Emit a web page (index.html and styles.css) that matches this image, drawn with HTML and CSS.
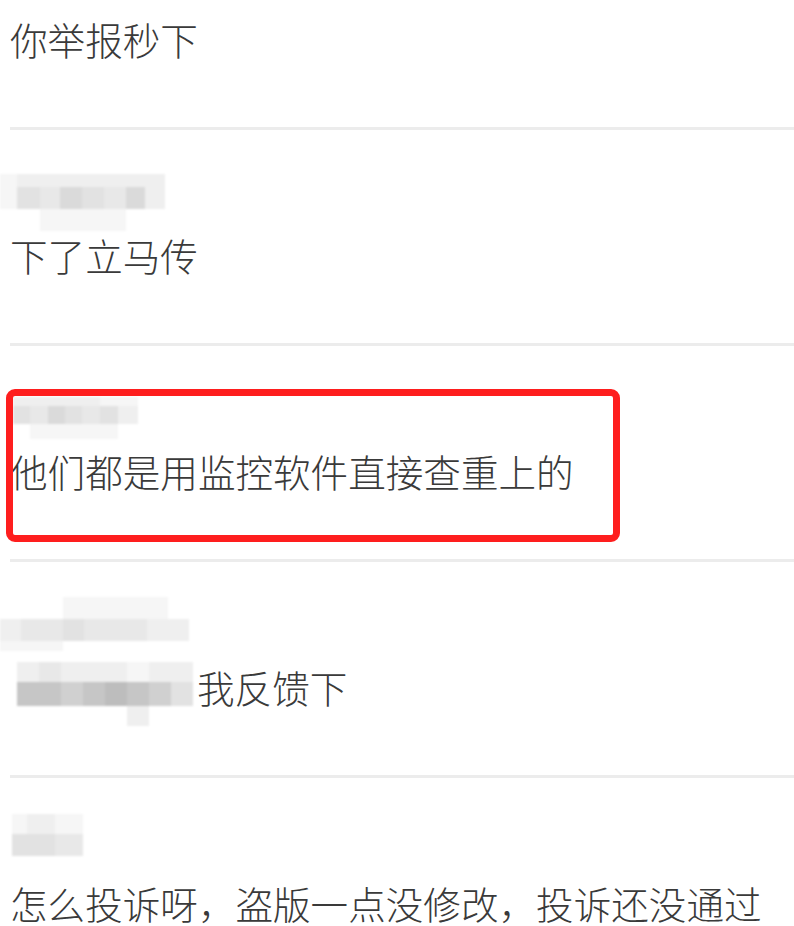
FILE: index.html
```html
<!DOCTYPE html>
<html lang="zh-CN">
<head>
<meta charset="utf-8">
<title>评论</title>
<link rel="stylesheet" href="styles.css">
</head>
<body>
<div class="list">
  <div class="comment first">
    <div class="text">你举报秒下</div>
  </div>

  <div class="comment">
    <div class="name">
      <div class="mosaic mz-a">
        <i class="s0"></i><i class="s1"></i><i class="s1"></i><i class="s1"></i><i class="s1"></i><i class="s1"></i><i class="s1"></i><i class="s1"></i>
        <i class="s0"></i><i class="s3"></i><i class="s2"></i><i class="s4"></i><i class="s3"></i><i class="s2"></i><i class="s4"></i><i class="s1"></i>
        <i></i><i></i><i class="s0"></i><i class="s0"></i><i class="s0"></i><i class="s0"></i><i></i><i></i>
      </div>
    </div>
    <div class="text">下了立马传</div>
  </div>

  <div class="comment marked">
    <div class="name">
      <div class="mosaic mz-b">
        <i class="s1"></i><i class="s1"></i><i class="s1"></i><i class="s1"></i><i class="s1"></i><i class="s0"></i><i class="s0"></i>
        <i class="s3"></i><i class="s2"></i><i class="s4"></i><i class="s3"></i><i class="s2"></i><i class="s3"></i><i class="s1"></i>
        <i></i><i class="s0"></i><i class="s0"></i><i class="s0"></i><i class="s0"></i><i class="s0"></i><i></i>
      </div>
    </div>
    <div class="text">他们都是用监控软件直接查重上的</div>
    <div class="highlight"></div>
  </div>

  <div class="comment">
    <div class="name">
      <div class="mosaic mz-c">
        <i></i><i></i><i></i><i class="s0"></i><i class="s0"></i><i class="s0"></i><i class="s0"></i><i class="s0"></i><i></i>
        <i class="s1"></i><i class="s2"></i><i class="s2"></i><i class="s3"></i><i class="s2"></i><i class="s2"></i><i class="s2"></i><i class="s1"></i><i class="s1"></i>
        <i class="s0"></i><i class="s0"></i><i class="s0"></i><i></i><i></i><i></i><i></i><i></i><i></i>
      </div>
    </div>
    <div class="text with-mosaic">
      <div class="mosaic mz-d">
        <i class="s1"></i><i class="s2"></i><i class="s1"></i><i class="s1"></i><i class="s1"></i><i class="s0"></i><i class="s1"></i><i class="s1"></i>
        <i class="s6"></i><i class="s6"></i><i class="s5"></i><i class="s6"></i><i class="s7"></i><i class="s6"></i><i class="s5"></i><i class="s3"></i>
        <i></i><i></i><i></i><i></i><i></i><i class="s1"></i><i></i><i></i>
      </div>
      <span>我反馈下</span>
    </div>
  </div>

  <div class="comment">
    <div class="name">
      <div class="mosaic mz-e">
        <i class="s0"></i><i class="s1"></i><i class="s1"></i><i class="s0"></i><i class="s0"></i>
        <i class="s3"></i><i class="s3"></i><i class="s3"></i><i class="s2"></i><i class="s2"></i>
      </div>
    </div>
    <div class="text">怎么投诉呀，盗版一点没修改，投诉还没通过</div>
  </div>
</div>
</body>
</html>
```
FILE: styles.css
```css
html, body {
  margin: 0;
  padding: 0;
  background: #ffffff;
  height: 926px;
  overflow: hidden;
}

body {
  font-family: "Noto Sans CJK SC", "Noto Sans", sans-serif;
  font-weight: 300;
  color: #3a3a3a;
}

.list {
  margin-left: 10px;
}

.comment {
  position: relative;
  padding-top: 44px;
  padding-bottom: 63px;
  border-bottom: 3px solid #ececec;
}

.comment.first {
  padding-top: 14px;
}

.name {
  display: flow-root;
  height: 56px;
}

.text {
  font-size: 37.6px;
  line-height: 50px;
  height: 50px;
  white-space: nowrap;
}

.text.with-mosaic {
  display: flex;
  align-items: flex-start;
}

.text.with-mosaic span {
  margin-left: 4px;
}

/* pixelated (mosaic) user names */
.mosaic {
  display: grid;
  filter: blur(1.2px);
}

.mosaic i {
  display: block;
}

.s0 { background: #f6f6f6; }
.s1 { background: #efefef; }
.s2 { background: #e8e8e8; }
.s3 { background: #e2e2e2; }
.s4 { background: #dadada; }
.s5 { background: #d0d0d0; }
.s6 { background: #c6c6c6; }
.s7 { background: #bdbdbd; }

.mz-a {
  margin-left: -10px;
  grid-template-columns: 17px 23px 20px 22px 22px 22px 19px 20px;
  grid-template-rows: 13px 22px 22px;
  width: 165px;
}

.mz-b {
  margin-left: 3px;
  margin-top: 7px;
  grid-template-columns: 17px 18px 17px 17px 18px 18px 20px;
  grid-template-rows: 9px 18px 15px;
  width: 125px;
}

.mz-c {
  margin-left: -10px;
  margin-top: -9px;
  grid-template-columns: repeat(9, 21px);
  grid-template-rows: 22px 22px 10px;
  width: 189px;
}

.mz-d {
  flex: none;
  margin-left: 7px;
  margin-top: 0;
  grid-template-columns: repeat(8, 22px);
  grid-template-rows: 20px 24px 20px;
  width: 176px;
  height: 64px;
}

.mz-e {
  margin-left: 2px;
  margin-top: -8px;
  grid-template-columns: 15px 15px 13px 13px 15px;
  grid-template-rows: 20px 22px;
  width: 71px;
}

/* red annotation frame drawn over the third comment */
.highlight {
  position: absolute;
  left: -4px;
  top: 43px;
  width: 614px;
  height: 153px;
  box-sizing: border-box;
  border: 7px solid #fe1e1e;
  border-radius: 9px;
}
```
